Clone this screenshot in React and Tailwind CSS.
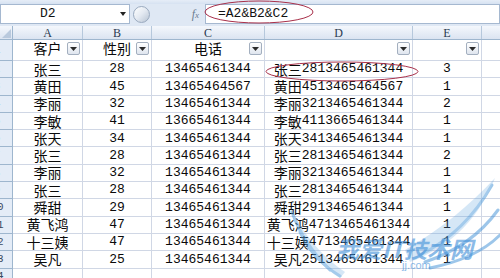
import React from "react";

const rows = [
  ["张三", "28", "13465461344", "3"],
  ["黄田", "45", "13465464567", "1"],
  ["李丽", "32", "13465461344", "2"],
  ["李敏", "41", "13665461344", "1"],
  ["张天", "34", "13465461344", "1"],
  ["张三", "28", "13465461344", "2"],
  ["李丽", "32", "13465461344", "1"],
  ["张三", "28", "13465461344", "1"],
  ["舜甜", "29", "13465461344", "1"],
  ["黄飞鸿", "47", "13465461344", "1"],
  ["十三姨", "47", "13465461344", "1"],
  ["吴凡", "25", "13465461344", "1"],
];

const mono = { fontFamily: '"Liberation Mono", "Noto Sans CJK SC", monospace' };
const cjk = { fontFamily: '"Noto Sans CJK SC", "Liberation Mono", sans-serif' };

function Filter() {
  return (
    <div className="absolute right-[2px] top-[2px] w-[13px] h-[13px] border border-[#a3afbf] rounded-[2px] bg-gradient-to-b from-[#ffffff] to-[#dfe5ee] flex items-center justify-center">
      <svg width="7" height="4" viewBox="0 0 7 4">
        <path d="M0 0 L7 0 L3.5 4 Z" fill="#2b2b2b" />
      </svg>
    </div>
  );
}

function RowHead({ n }) {
  return (
    <div className="w-[13px] shrink-0 overflow-hidden bg-[#e4ecf7] border-r border-b border-[#9eb6ce] flex items-center">
      <div className="w-[32px] shrink-0 ml-[-19px] text-center text-[11px] text-[#3a4a60]" style={mono}>
        {n}
      </div>
    </div>
  );
}

const cell = "shrink-0 border-r border-b border-[#d0d7e5] flex items-center justify-center whitespace-nowrap text-[#0a0a0a]";

export default function App() {
  return (
    <div className="w-[500px] h-[278px] overflow-hidden relative bg-white" style={mono}>
      <div className="h-[4px] bg-gradient-to-b from-[#e6edf7] to-[#d6e2f1]" />
      <div className="h-[20px] flex bg-[#dfe8f4]">
        <div className="w-[130px] shrink-0 bg-white border border-[#a5b8d0] flex items-center">
          <span className="pl-[39px] text-[13px] text-[#111]">D2</span>
          <svg className="ml-auto mr-[3px]" width="6" height="4" viewBox="0 0 6 4">
            <path d="M0 0 L6 0 L3 4 Z" fill="#222" />
          </svg>
        </div>
        <div className="w-[75px] shrink-0 flex items-center">
          <div className="ml-[3px] w-[17px] h-[17px] rounded-full border border-[#9aaabf] bg-gradient-to-br from-[#ffffff] via-[#e3e9f1] to-[#b7c3d3]" />
          <span
            className="ml-auto mr-[6px] text-[12px] italic text-[#6b7b8f]"
            style={{ fontFamily: '"Liberation Serif", serif' }}
          >
            f<span className="text-[9px]">x</span>
          </span>
        </div>
        <div className="flex-1 bg-white border border-[#a5b8d0] flex items-center pl-[12px]">
          <span className="text-[13px] text-[#111]">=A2&amp;B2&amp;C2</span>
        </div>
      </div>
      <div className="h-[2px] bg-[#dfe8f4]" />

      <div className="h-[14px] flex bg-gradient-to-b from-[#f4f7fc] to-[#dbe4f1] border-b border-[#9eb6ce]" style={{ fontFamily: '"Liberation Serif", serif' }}>
        <div className="w-[13px] shrink-0 border-r border-[#9eb6ce] flex items-end justify-end pr-[1px] pb-[1px]">
          <svg width="9" height="9" viewBox="0 0 9 9">
            <path d="M9 0 L9 9 L0 9 Z" fill="#b9c9dd" />
          </svg>
        </div>
        {[["A", 70], ["B", 69], ["C", 113], ["D", 148], ["E", 69], ["", 40]].map(([l, w], i) => (
          <div
            key={i}
            className="shrink-0 border-r border-[#b6c8dc] flex items-center justify-center text-[12px] text-[#2a3a50]"
            style={{ width: w }}
          >
            {l}
          </div>
        ))}
      </div>

      <div className="h-[21px] flex">
        <RowHead n="1" />
        <div className={cell + " w-[70px] relative pb-[3px]"}>
          <span className="text-[14px]" style={cjk}>客户</span>
          <Filter />
        </div>
        <div className={cell + " w-[69px] relative pb-[3px]"}>
          <span className="text-[14px]" style={cjk}>性别</span>
          <Filter />
        </div>
        <div className={cell + " w-[113px] relative pb-[3px]"}>
          <span className="text-[14px]" style={cjk}>电话</span>
          <Filter />
        </div>
        <div className={cell + " w-[148px] relative"}>
          <Filter />
        </div>
        <div className={cell + " w-[69px] relative"}>
          <Filter />
        </div>
        <div className={cell + " w-[40px]"} />
      </div>

      {rows.map((r, i) => (
        <div key={i} className="h-[17.3px] flex">
          <RowHead n={String(i + 2)} />
          <div className={cell + " w-[70px]"}>
            <span className="text-[14px]" style={cjk}>{r[0]}</span>
          </div>
          <div className={cell + " w-[69px] text-[13px]"}>{r[1]}</div>
          <div className={cell + " w-[113px] text-[13px]"}>{r[2]}</div>
          <div className={cell + " w-[148px] text-[13px]"}>
            <span className="text-[14px]" style={cjk}>{r[0]}</span>
            <span>{r[1]}{r[2]}</span>
          </div>
          <div className={cell + " w-[69px] text-[13px]"}>{r[3]}</div>
          <div className={cell + " w-[40px]"} />
        </div>
      ))}

      <div className="h-[17.3px] flex">
        <RowHead n="14" />
        <div className={cell + " w-[70px]"} />
        <div className={cell + " w-[69px]"} />
        <div className={cell + " w-[113px]"} />
        <div className={cell + " w-[148px]"} />
        <div className={cell + " w-[69px]"} />
        <div className={cell + " w-[40px]"} />
      </div>

      <svg className="absolute left-0 top-0 pointer-events-none" width="500" height="278" viewBox="0 0 500 278">
        <ellipse cx="259" cy="12" rx="54" ry="11" fill="none" stroke="#a8304a" strokeWidth="1" />
        <ellipse cx="342" cy="71.5" rx="76" ry="9.5" fill="none" stroke="#a8304a" strokeWidth="1" />
      </svg>

      <svg className="absolute left-0 top-0 pointer-events-none opacity-50" width="500" height="278" viewBox="0 0 500 278">
        <g fill="none" stroke="#3d8fd6" strokeWidth="3" strokeLinecap="round">
          <path d="M420 255 C450 240 475 215 492 185" />
          <path d="M425 262 C455 252 480 235 498 210" />
          <path d="M430 268 C460 262 485 250 500 235" />
          <path d="M330 270 C315 255 300 235 292 212" />
          <path d="M340 276 C322 265 308 250 300 232" />
        </g>
        <path d="M405 250 C440 230 470 205 495 178 C480 215 455 245 410 262 Z" fill="#5aa2e0" opacity="0.5" />
        <path d="M345 272 C320 255 300 230 290 205 C300 240 315 262 340 278 Z" fill="#5aa2e0" opacity="0.5" />
      </svg>
      <div
        className="absolute left-[336px] top-[237px] text-[23px] font-bold italic text-[#3f8fd8] opacity-60 pointer-events-none leading-none"
        style={cjk}
      >
        我爱IT技术网
      </div>
      <div
        className="absolute left-[402px] top-[260px] text-[11px] text-[#3f8fd8] opacity-60 pointer-events-none leading-none"
        style={{ fontFamily: '"Liberation Sans", sans-serif' }}
      >
        jj.com
      </div>
    </div>
  );
}
